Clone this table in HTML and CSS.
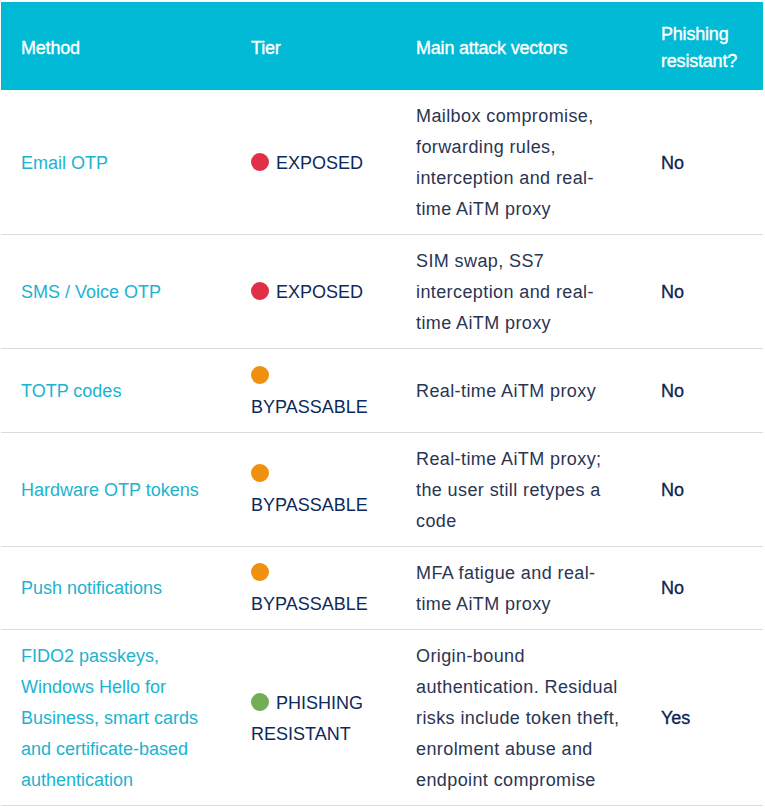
FILE: index.html
```html
<!DOCTYPE html>
<html lang="en">
<head>
<meta charset="utf-8">
<title>MFA methods</title>
<link rel="stylesheet" href="styles.css">
</head>
<body>
<table class="mfa">
  <colgroup>
    <col class="c-method">
    <col class="c-tier">
    <col class="c-vectors">
    <col class="c-resist">
  </colgroup>
  <thead>
    <tr>
      <th>Method</th>
      <th>Tier</th>
      <th>Main attack vectors</th>
      <th>Phishing resistant?</th>
    </tr>
  </thead>
  <tbody>
    <tr>
      <td class="method">Email OTP</td>
      <td class="tier"><span class="dot red"></span> EXPOSED</td>
      <td class="vec">Mailbox compromise, forwarding rules, interception and real-time AiTM proxy</td>
      <td class="res">No</td>
    </tr>
    <tr>
      <td class="method">SMS / Voice OTP</td>
      <td class="tier"><span class="dot red"></span> EXPOSED</td>
      <td class="vec">SIM swap, SS7 interception and real-time AiTM proxy</td>
      <td class="res">No</td>
    </tr>
    <tr>
      <td class="method">TOTP codes</td>
      <td class="tier"><span class="dot orange"></span> BYPASSABLE</td>
      <td class="vec">Real-time AiTM proxy</td>
      <td class="res">No</td>
    </tr>
    <tr>
      <td class="method">Hardware OTP tokens</td>
      <td class="tier"><span class="dot orange"></span> BYPASSABLE</td>
      <td class="vec">Real-time AiTM proxy; the user still retypes a code</td>
      <td class="res">No</td>
    </tr>
    <tr>
      <td class="method">Push notifications</td>
      <td class="tier"><span class="dot orange"></span> BYPASSABLE</td>
      <td class="vec">MFA fatigue and real-time AiTM proxy</td>
      <td class="res">No</td>
    </tr>
    <tr>
      <td class="method">FIDO2 passkeys, Windows Hello for Business, smart cards and certificate-based authentication</td>
      <td class="tier"><span class="dot green"></span> PHISHING RESISTANT</td>
      <td class="vec">Origin-bound authentication. Residual risks include token theft, enrolment abuse and endpoint compromise</td>
      <td class="res">Yes</td>
    </tr>
  </tbody>
</table>
</body>
</html>
```

FILE: styles.css
```css
html, body {
  margin: 0;
  padding: 0;
  background: #ffffff;
}

body {
  font-family: "Liberation Sans", Arial, Helvetica, sans-serif;
  font-size: 18px;
  padding: 2px 0 0 1px;
}

.mfa {
  width: 762px;
  border-collapse: collapse;
  table-layout: fixed;
}

.c-method { width: 230px; }
.c-tier { width: 165px; }
.c-vectors { width: 245px; }
.c-resist { width: 122px; }

.mfa th {
  background: #00bad6;
  color: #ffffff;
  font-weight: normal;
  -webkit-text-stroke: 0.35px #ffffff;
  text-align: left;
  padding: 19px 20px 15px;
  line-height: 27px;
  vertical-align: middle;
  letter-spacing: -0.2px;
}

.mfa td {
  padding: 11.2px 20px 9px;
  line-height: 31px;
  vertical-align: middle;
  border-bottom: 1px solid #dcdcdc;
  color: #1f2c4c;
}

.mfa td.method {
  color: #1bb3d1;
}

.mfa td.tier {
  color: #0c2a5b;
}

.mfa td.vec {
  color: #2a3553;
  letter-spacing: 0.4px;
}

.mfa td.res {
  color: #0b2452;
  -webkit-text-stroke: 0.3px #0b2452;
}

.dot {
  display: inline-block;
  width: 18px;
  height: 18px;
  margin-right: 2px;
  border-radius: 50%;
  vertical-align: -2px;
}

.dot.red { background: #df3048; }
.dot.orange { background: #f0900f; }
.dot.green { background: #73ae56; }
```
